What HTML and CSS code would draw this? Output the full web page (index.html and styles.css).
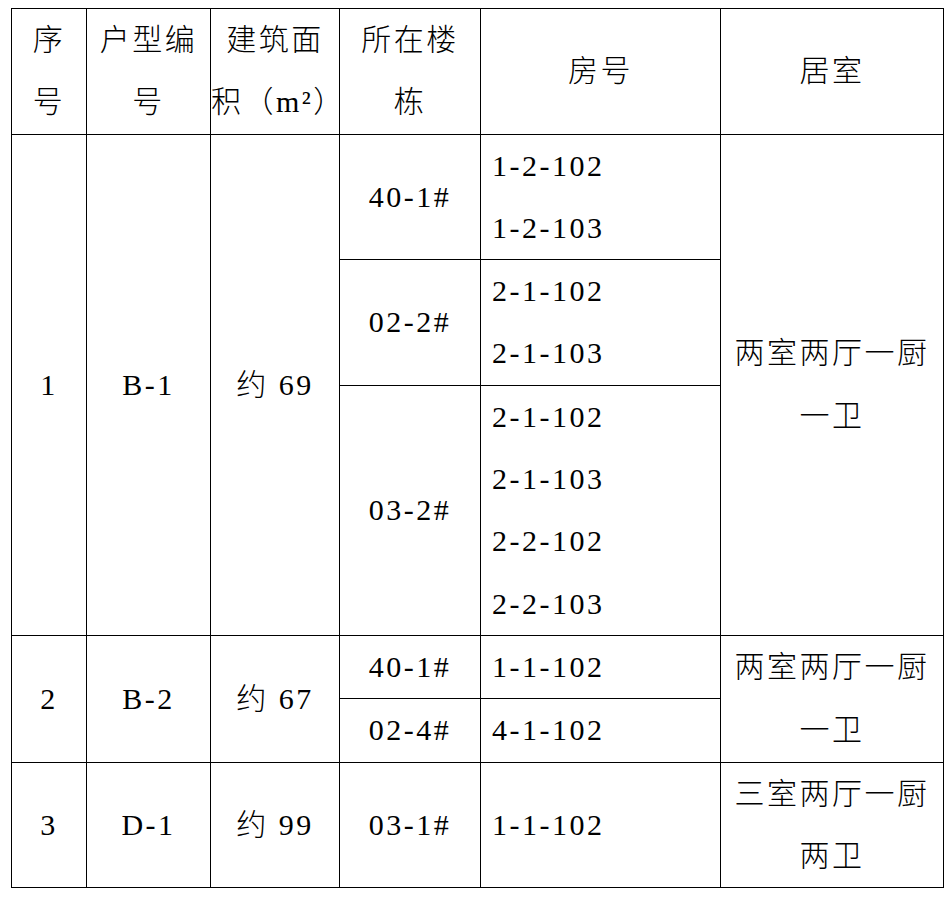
FILE: index.html
```html
<!DOCTYPE html>
<html lang="zh-CN">
<head>
<meta charset="utf-8">
<link rel="stylesheet" href="styles.css">
</head>
<body>
<table class="grid">
  <colgroup>
    <col class="c1"><col class="c2"><col class="c3"><col class="c4"><col class="c5"><col class="c6">
  </colgroup>
  <tr>
    <th>序<br>号</th>
    <th>户型编<br>号</th>
    <th>建筑面<br>积（m²）</th>
    <th>所在楼<br>栋</th>
    <th>房号</th>
    <th>居室</th>
  </tr>
  <tr>
    <td rowspan="3">1</td>
    <td rowspan="3">B-1</td>
    <td rowspan="3">约 69</td>
    <td>40-1#</td>
    <td class="room">1-2-102<br>1-2-103</td>
    <td rowspan="3">两室两厅一厨<br>一卫</td>
  </tr>
  <tr>
    <td>02-2#</td>
    <td class="room">2-1-102<br>2-1-103</td>
  </tr>
  <tr>
    <td>03-2#</td>
    <td class="room">2-1-102<br>2-1-103<br>2-2-102<br>2-2-103</td>
  </tr>
  <tr>
    <td rowspan="2">2</td>
    <td rowspan="2">B-2</td>
    <td rowspan="2">约 67</td>
    <td>40-1#</td>
    <td class="room">1-1-102</td>
    <td rowspan="2">两室两厅一厨<br>一卫</td>
  </tr>
  <tr>
    <td>02-4#</td>
    <td class="room">4-1-102</td>
  </tr>
  <tr>
    <td>3</td>
    <td>D-1</td>
    <td>约 99</td>
    <td>03-1#</td>
    <td class="room">1-1-102</td>
    <td>三室两厅一厨<br>两卫</td>
  </tr>
</table>
</body>
</html>
```
FILE: styles.css
```css
html, body {
  background: #fff;
}
body {
  margin: 8px 0 0 11px;
  font-family: "Liberation Serif", "Noto Sans CJK SC", serif;
  font-size: 30px;
  color: #000;
}
.grid {
  border-collapse: collapse;
  table-layout: fixed;
  width: 932px;
}
.c1 { width: 75px; }
.c2 { width: 124px; }
.c3 { width: 129px; }
.c4 { width: 141px; }
.c5 { width: 240px; }
.c6 { width: 223px; }
.grid th,
.grid td {
  border: 1.5px solid #000;
  padding: 0;
  line-height: 62.3px;
  text-align: center;
  vertical-align: middle;
  font-weight: 300;
  letter-spacing: 2.5px;
  white-space: nowrap;
}
.grid td.room {
  text-align: left;
  padding-left: 11px;
}
```
